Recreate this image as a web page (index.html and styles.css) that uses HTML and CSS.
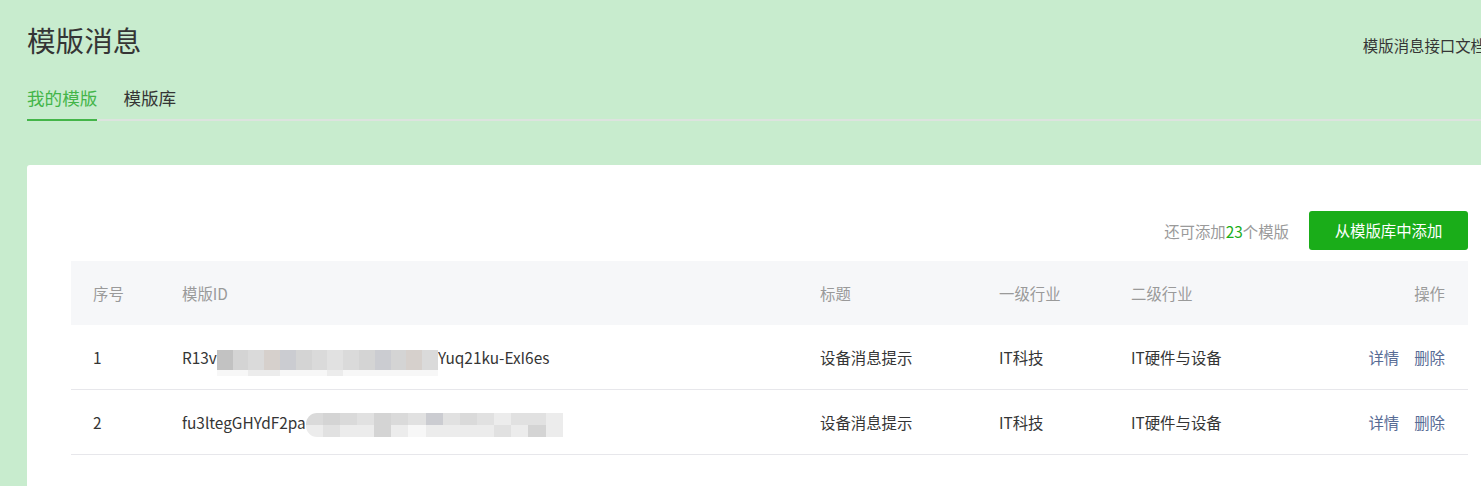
FILE: index.html
```html
<!DOCTYPE html>
<html lang="zh-CN">
<head>
<meta charset="utf-8">
<title>模版消息</title>
<link rel="stylesheet" href="styles.css">
</head>
<body>
<div class="page">
  <div class="head">
    <h1 class="title">模版消息</h1>
    <a class="doc-link">模版消息接口文档</a>
  </div>
  <nav class="tabs">
    <a class="tab active">我的模版</a>
    <a class="tab">模版库</a>
  </nav>
  <section class="card">
    <div class="toolbar">
      <span class="quota">还可添加<em>23</em>个模版</span>
      <button class="btn">从模版库中添加</button>
    </div>
    <table class="list">
      <colgroup>
        <col class="c1"><col class="c2"><col class="c3"><col class="c4"><col class="c5"><col class="c6">
      </colgroup>
      <thead>
        <tr><th>序号</th><th>模版ID</th><th>标题</th><th>一级行业</th><th>二级行业</th><th class="ops">操作</th></tr>
      </thead>
      <tbody>
        <tr>
          <td>1</td>
          <td>R13v<span class="mask m1"><i class="a"></i><i class="b"></i><i class="c"></i><i class="d"></i><i class="e"></i><i class="b"></i><i class="c"></i><i class="f"></i><i class="c"></i><i class="b"></i><i class="e"></i><i class="b"></i><i class="d"></i><i class="c"></i><i class="w"></i><i class="w"></i><i class="l"></i><i class="l"></i><i class="w"></i><i class="w"></i><i class="w"></i><i class="l"></i><i class="w"></i><i class="w"></i><i class="w"></i><i class="w"></i><i class="w"></i><i class="w"></i></span>Yuq21ku-ExI6es</td>
          <td>设备消息提示</td>
          <td>IT科技</td>
          <td>IT硬件与设备</td>
          <td class="ops"><a>详情</a><a>删除</a></td>
        </tr>
        <tr>
          <td>2</td>
          <td>fu3ltegGHYdF2pa<span class="mask m2"><i class="c"></i><i class="b"></i><i class="c"></i><i class="f"></i><i class="b"></i><i class="c"></i><i class="f"></i><i class="e"></i><i class="f"></i><i class="c"></i><i class="f"></i><i class="l"></i><i class="f"></i><i class="f"></i><i class="l"></i><i class="l"></i><i class="f"></i><i class="l"></i><i class="l"></i><i class="b"></i><i class="l"></i><i class="w"></i><i class="l"></i><i class="l"></i><i class="l"></i><i class="l"></i><i class="f"></i><i class="l"></i><i class="b"></i><i class="l"></i></span></td>
          <td>设备消息提示</td>
          <td>IT科技</td>
          <td>IT硬件与设备</td>
          <td class="ops"><a>详情</a><a>删除</a></td>
        </tr>
      </tbody>
    </table>
  </section>
</div>
</body>
</html>
```

FILE: styles.css
```css
html, body {
  margin: 0;
  padding: 0;
  overflow: hidden;
}
body {
  background: #c8ecce;
  font-family: "Noto Sans CJK SC", "Noto Sans", sans-serif;
  font-size: 15.4px;
  color: #353535;
  height: 486px;
}
.page {
  width: 1485px;
  margin-left: 27px;
  padding-top: 20px;
}
.head {
  display: flex;
  align-items: baseline;
  justify-content: space-between;
}
.title {
  margin: 0;
  font-size: 28.6px;
  font-weight: normal;
  line-height: 40px;
  color: #353535;
}
.doc-link {
  font-size: 15.4px;
  color: #353535;
  margin-right: 26px;
  line-height: 22px;
}
.tabs {
  display: flex;
  margin-top: 19px;
  border-bottom: 2px solid #dde3df;
}
.tab {
  font-size: 17.6px;
  line-height: 38px;
  padding-bottom: 2px;
  margin-right: 26px;
  color: #353535;
}
.tab.active {
  color: #44b549;
  border-bottom: 2px solid #44b549;
  margin-bottom: -2px;
}
.card {
  margin-top: 44px;
  background: #fff;
  border-radius: 3px 3px 0 0;
  padding: 46px 44px 31px;
}
.toolbar {
  display: flex;
  justify-content: flex-end;
  align-items: center;
  gap: 20px;
  height: 39px;
}
.quota {
  color: #9a9a9a;
  line-height: 20px;
}
.quota em {
  font-style: normal;
  color: #1aad19;
}
.btn {
  font-family: inherit;
  font-size: 15.4px;
  color: #fff;
  background: #1aad19;
  border: 0;
  border-radius: 3px;
  width: 159px;
  height: 39px;
  padding: 0;
  line-height: 39px;
}
.list {
  margin-top: 11px;
  width: 1397px;
  border-collapse: collapse;
  table-layout: fixed;
}
.c1 { width: 89px; }
.c2 { width: 638px; }
.c3 { width: 179px; }
.c4 { width: 132px; }
.c5 { width: 200px; }
.list th {
  background: #f6f7f9;
  color: #9a9a9a;
  font-weight: normal;
  text-align: left;
  height: 64px;
  padding: 0 0 0 22px;
  line-height: 20px;
}
.list td {
  height: 64px;
  padding: 0 0 0 22px;
  border-bottom: 1px solid #e7e7eb;
  line-height: 20px;
  white-space: nowrap;
}
.list .ops {
  text-align: right;
  padding-right: 23px;
}
.ops a {
  color: #576b95;
  margin-left: 15px;
}
.mask {
  display: inline-grid;
  vertical-align: middle;
  margin-top: -12px;
  margin-bottom: -12px;
}
.mask i { display: block; }
.m1 {
  width: 221px;
  height: 26px;
  grid-template-columns: repeat(14, 1fr);
  grid-template-rows: 20px 6px;
  transform: translateY(3px);
}
.m2 {
  width: 257px;
  height: 24px;
  grid-template-columns: repeat(15, 1fr);
  grid-template-rows: 12px 12px;
  border-radius: 11px 0 0 11px;
  overflow: hidden;
}
.mask .a { background: #c2c2c2; }
.mask .b { background: #d4d4d4; }
.mask .c { background: #dadada; }
.mask .d { background: #d6d0cc; }
.mask .e { background: #cbccd1; }
.mask .f { background: #e1e1e1; }
.mask .l { background: #ececec; }
.mask .w { background: #f7f7f7; }
```
